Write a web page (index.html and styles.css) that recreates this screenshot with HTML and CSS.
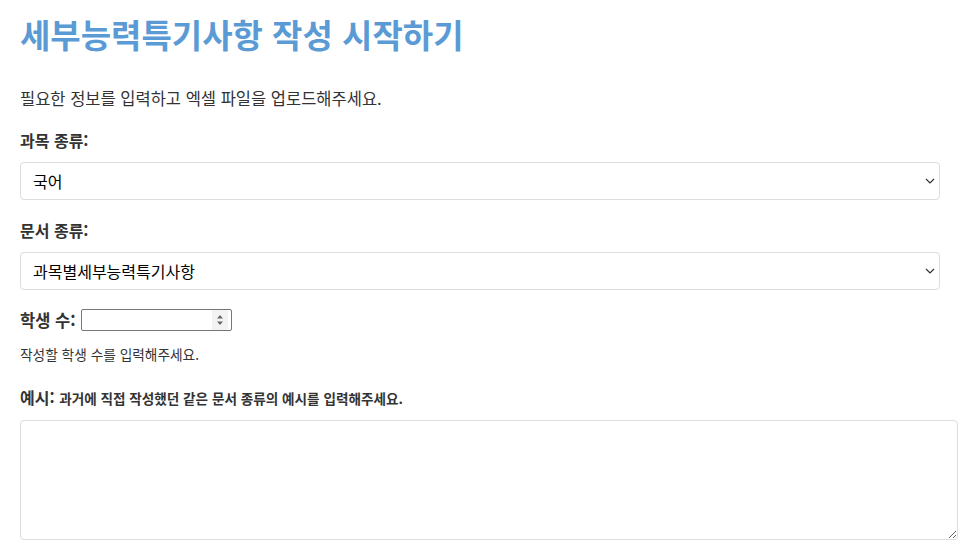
FILE: index.html
```html
<!DOCTYPE html>
<html lang="ko">
<head>
    <meta charset="UTF-8">
    <meta name="viewport" content="width=device-width, initial-scale=1.0">
    <title>세부능력특기사항 작성</title>
    <link rel="stylesheet" href="styles.css">
</head>
<body>
    <h1>세부능력특기사항 작성 시작하기</h1>
    <p class="intro">필요한 정보를 입력하고 엑셀 파일을 업로드해주세요.</p>

    <div class="field">
        <label for="subject">과목 종류:</label>
        <select id="subject" class="select">
            <option>국어</option>
            <option>수학</option>
            <option>영어</option>
        </select>
    </div>

    <div class="field">
        <label for="doctype">문서 종류:</label>
        <select id="doctype" class="select">
            <option>과목별세부능력특기사항</option>
            <option>행동특성 및 종합의견</option>
        </select>
    </div>

    <div class="field students">
        <div class="inline-row">
            <label for="students">학생 수:</label>
            <input type="number" id="students" class="number" min="1">
        </div>
        <p class="hint">작성할 학생 수를 입력해주세요.</p>
    </div>

    <div class="field">
        <label for="example">예시: <small>과거에 직접 작성했던 같은 문서 종류의 예시를 입력해주세요.</small></label>
        <textarea id="example" rows="6"></textarea>
    </div>
</body>
</html>
```

FILE: styles.css
```css
body {
    font-family: "Noto Sans CJK KR", "Noto Sans", sans-serif;
    margin: 0;
    padding: 14px 20px 20px;
    max-width: 920px;
    color: #333;
    background-color: #fff;
    line-height: 24px;
}
h1 {
    color: #5b9bd5;
    font-size: 33px;
    line-height: 40px;
    margin: 0 0 32px;
}
.intro {
    font-size: 16.5px;
    margin: 0 0 18px;
}
.field {
    margin-bottom: 18px;
}
.field.students {
    margin-bottom: 21px;
}
label {
    display: block;
    font-weight: bold;
    font-size: 16px;
    margin-bottom: 10px;
}
label small {
    font-size: 13.6px;
}
.select {
    display: block;
    width: 100%;
    height: 38px;
    padding: 0 30px 0 12px;
    font-family: inherit;
    font-size: 16px;
    border: 1px solid #ddd;
    border-radius: 4px;
    color: #000;
    appearance: none;
    -webkit-appearance: none;
    background: #fff url("data:image/svg+xml,%3Csvg xmlns='http://www.w3.org/2000/svg' width='10' height='6' viewBox='0 0 10 6'%3E%3Cpath d='M1 1l4 4 4-4' fill='none' stroke='%23333' stroke-width='1.2'/%3E%3C/svg%3E") no-repeat right 4px center;
}
.inline-row {
    display: flex;
    align-items: center;
    gap: 5px;
    height: 24px;
    margin-top: 3px;
}
.inline-row label {
    margin: 0;
    font-size: 16.5px;
}
.number {
    width: 151px;
    height: 22px;
    box-sizing: border-box;
    border: 1px solid #767676;
    border-radius: 2px;
    padding: 0 20px 0 4px;
    font-size: 13px;
    background: #fff url("data:image/svg+xml,%3Csvg xmlns='http://www.w3.org/2000/svg' width='16' height='20' viewBox='0 0 16 20'%3E%3Crect width='16' height='20' fill='%23f3f3f3'/%3E%3Cpath d='M5 8.5L8 5 11 8.5z M5 11.5L8 15 11 11.5z' fill='%23666'/%3E%3C/svg%3E") no-repeat right 3px center;
}
.number::-webkit-inner-spin-button {
    -webkit-appearance: none;
    margin: 0;
}
.hint {
    font-size: 13.7px;
    line-height: 20px;
    margin: 12px 0 0;
}
textarea {
    display: block;
    width: 100%;
    padding: 8px;
    border: 1px solid #ddd;
    border-radius: 4px;
    font-family: inherit;
    font-size: 14px;
    box-sizing: content-box;
    height: 102px;
}
```
